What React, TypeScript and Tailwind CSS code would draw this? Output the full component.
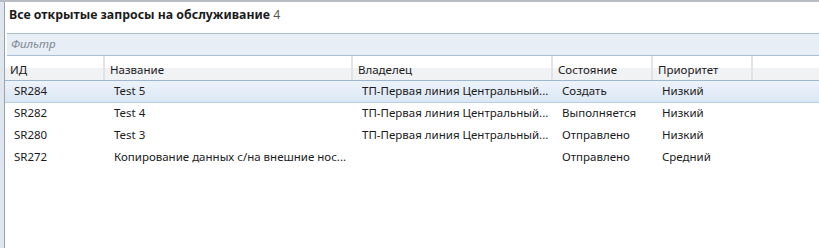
const font = { fontFamily: '"Noto Sans", "Open Sans", sans-serif' };

interface Row {
  id: string;
  name: string;
  owner: string;
  state: string;
  priority: string;
}

const rows: Row[] = [
  { id: "SR284", name: "Test 5", owner: "ТП-Первая линия Центральный...", state: "Создать", priority: "Низкий" },
  { id: "SR282", name: "Test 4", owner: "ТП-Первая линия Центральный...", state: "Выполняется", priority: "Низкий" },
  { id: "SR280", name: "Test 3", owner: "ТП-Первая линия Центральный...", state: "Отправлено", priority: "Низкий" },
  { id: "SR272", name: "Копирование данных с/на внешние нос...", owner: "", state: "Отправлено", priority: "Средний" },
];

const cols = ["w-[100px]", "w-[248px]", "w-[200px]", "w-[100px]", "w-[100px]"];
const headers = ["ИД", "Название", "Владелец", "Состояние", "Приоритет"];

export default function App() {
  return (
    <div className="w-[819px] h-[248px] bg-white flex flex-col overflow-hidden text-[#1b1b1b]" style={font}>
      <div className="h-[2px] bg-[#b8bdc3] shrink-0" />
      <div className="flex flex-1">
        <div className="w-[5px] bg-[#dfe6ee] border-r border-[#9ba2aa] shrink-0" />
        <div className="flex-1 flex flex-col">
          <div className="h-[31px] pl-[4px] pt-[4px] text-[12.3px] leading-[18px]">
            <span className="font-bold">Все открытые запросы на обслуживание</span>{" "}
            <span className="text-[#555]">4</span>
          </div>
          <div className="ml-[2px] h-[23px] border-y border-[#a9bdd3] bg-[#e8eef5] pl-[4px] text-[11.5px] leading-[20px] italic text-[#7d8894]">
            Фильтр
          </div>
          <div className="flex h-[25px] text-[11.5px] border-b border-[#9cb6d4]">
            {headers.map((h, i) => (
              <div
                key={h}
                className={`${cols[i]} h-full border-r-2 border-[#e2e3e5] pl-[5px] pt-[6px] leading-[16px] bg-gradient-to-b from-white from-50% to-[#f1f2f4] to-50%`}
              >
                {h}
              </div>
            ))}
            <div className="flex-1 h-full bg-gradient-to-b from-white from-50% to-[#f1f2f4] to-50%" />
          </div>
          {rows.map((r, i) => (
            <div
              key={r.id}
              className={`flex h-[22px] text-[11.5px] leading-[20px] whitespace-nowrap ${
                i === 0 ? "bg-gradient-to-b from-[#edf3fa] to-[#dbe7f4] border-b border-[#b9cde4]" : ""
              }`}
            >
              <div className={`${cols[0]} pl-[9px]`}>{r.id}</div>
              <div className={`${cols[1]} pl-[9px]`}>{r.name}</div>
              <div className={`${cols[2]} pl-[9px]`}>{r.owner}</div>
              <div className={`${cols[3]} pl-[9px]`}>{r.state}</div>
              <div className={`${cols[4]} pl-[9px]`}>{r.priority}</div>
              <div className="flex-1" />
            </div>
          ))}
        </div>
      </div>
    </div>
  );
}
